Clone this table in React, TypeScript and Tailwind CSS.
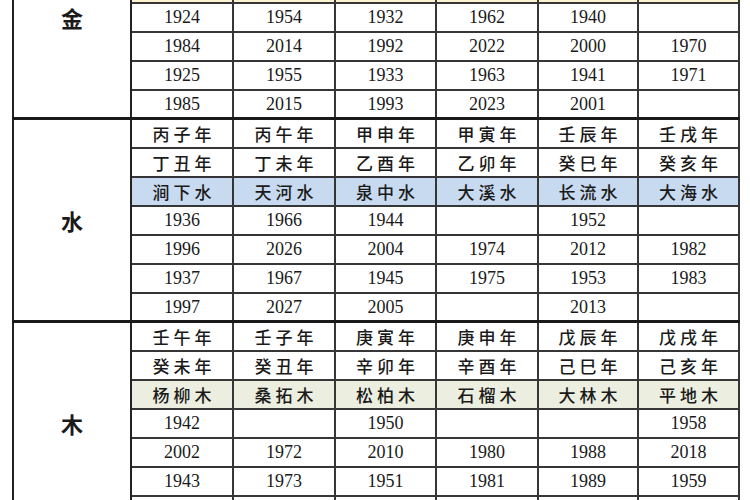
type Section = {
  name: string
  tint: string
  rows: string[][]
}

// 金 的前三行在截图上方之外，只保留行高用于让“金”字居中
const sections: Section[] = [
  {
    name: '金',
    tint: 'bg-[#fdf3d0]',
    rows: [
      ['', '', '', '', '', ''],
      ['', '', '', '', '', ''],
      ['', '', '', '', '', ''],
      ['1924', '1954', '1932', '1962', '1940', ''],
      ['1984', '2014', '1992', '2022', '2000', '1970'],
      ['1925', '1955', '1933', '1963', '1941', '1971'],
      ['1985', '2015', '1993', '2023', '2001', ''],
    ],
  },
  {
    name: '水',
    tint: 'bg-[#c8daf0]',
    rows: [
      ['丙子年', '丙午年', '甲申年', '甲寅年', '壬辰年', '壬戌年'],
      ['丁丑年', '丁未年', '乙酉年', '乙卯年', '癸巳年', '癸亥年'],
      ['涧下水', '天河水', '泉中水', '大溪水', '长流水', '大海水'],
      ['1936', '1966', '1944', '', '1952', ''],
      ['1996', '2026', '2004', '1974', '2012', '1982'],
      ['1937', '1967', '1945', '1975', '1953', '1983'],
      ['1997', '2027', '2005', '', '2013', ''],
    ],
  },
  {
    name: '木',
    tint: 'bg-[#eceee0]',
    rows: [
      ['壬午年', '壬子年', '庚寅年', '庚申年', '戊辰年', '戊戌年'],
      ['癸未年', '癸丑年', '辛卯年', '辛酉年', '己巳年', '己亥年'],
      ['杨柳木', '桑拓木', '松柏木', '石榴木', '大林木', '平地木'],
      ['1942', '', '1950', '', '', '1958'],
      ['2002', '1972', '2010', '1980', '1988', '2018'],
      ['1943', '1973', '1951', '1981', '1989', '1959'],
      ['2003', '', '2011', '', '', '2019'],
    ],
  },
]

const cjk = "font-['Noto_Sans_CJK_SC',sans-serif]"
const num = "font-['Liberation_Serif','Noto_Sans_CJK_SC',serif]"

export default function App() {
  return (
    <div className="w-[750px] h-[500px] overflow-hidden bg-white">
      <div className="-mt-[86px] ml-[12px] w-[726px]">
        <table className="w-full table-fixed border-collapse border-2 border-[#222] text-[#1a1a1a]">
          <colgroup>
            <col className="w-[118px]" />
            <col className="w-[102px]" />
            <col className="w-[102px]" />
            <col className="w-[101px]" />
            <col className="w-[102px]" />
            <col className="w-[100px]" />
            <col className="w-[101px]" />
          </colgroup>
          <tbody>
            {sections.map((section) =>
              section.rows.map((row, i) => (
                <tr
                  key={section.name + i}
                  className={`h-[29px] ${i === 2 ? section.tint : ''} ${i === 0 ? 'border-t-[3px] border-t-[#1a1a1a]' : ''}`}
                >
                  {i === 0 && (
                    <td
                      rowSpan={7}
                      className={`bg-white border-2 border-[#222] text-center align-middle text-[22px] font-bold ${cjk}`}
                    >
                      {section.name}
                    </td>
                  )}
                  {row.map((cell, j) => (
                    <td
                      key={j}
                      className={`p-0 border-2 border-[#363636] text-center align-middle leading-none ${
                        i < 3
                          ? `${cjk} text-[17px] font-medium tracking-[4px] pl-[4px]`
                          : `${num} text-[18px]`
                      }`}
                    >
                      {cell}
                    </td>
                  ))}
                </tr>
              ))
            )}
          </tbody>
        </table>
      </div>
    </div>
  )
}
